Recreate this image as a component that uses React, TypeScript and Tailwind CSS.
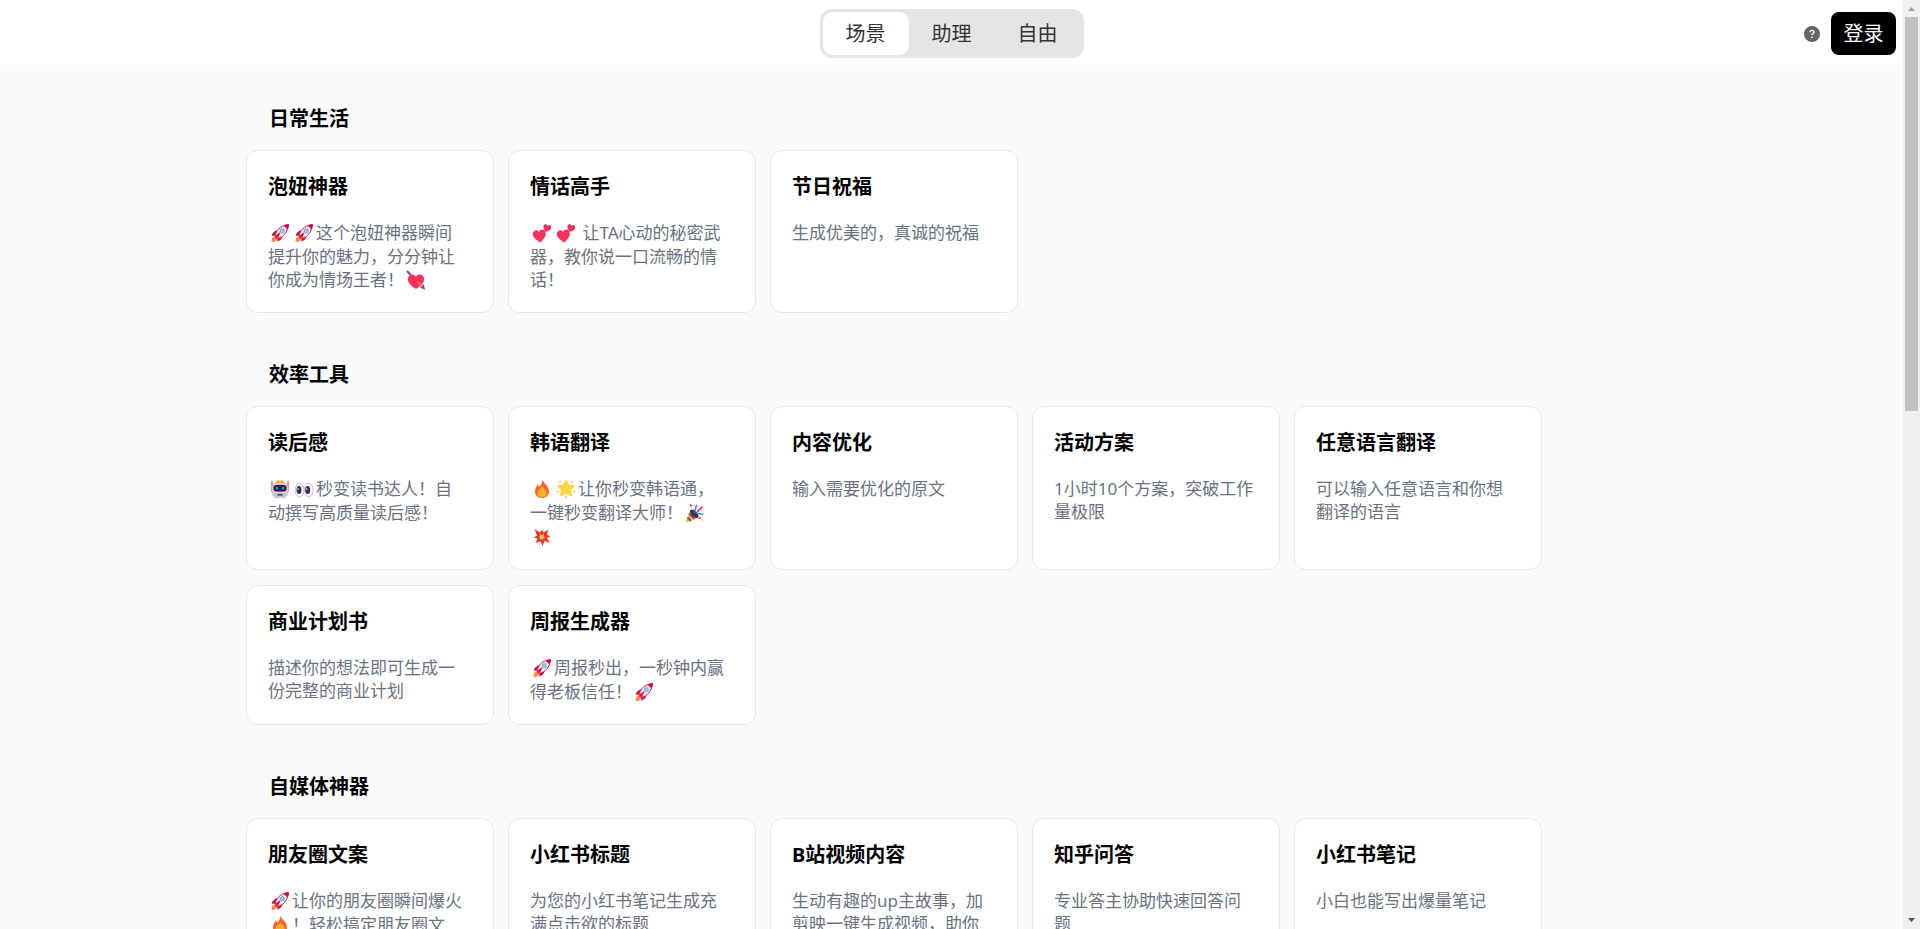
import { Fragment, useState, type ReactNode } from "react";

interface Scene {
  title: string;
  description: string;
}

interface SceneGroup {
  name: string;
  scenes: Scene[];
}

const tabs = ["场景", "助理", "自由"];

const groups: SceneGroup[] = [
  {
    name: "日常生活",
    scenes: [
      { title: "泡妞神器", description: "🚀🚀这个泡妞神器瞬间提升你的魅力，分分钟让你成为情场王者！💘" },
      { title: "情话高手", description: "💕💕 让TA心动的秘密武器，教你说一口流畅的情话！" },
      { title: "节日祝福", description: "生成优美的，真诚的祝福" },
    ],
  },
  {
    name: "效率工具",
    scenes: [
      { title: "读后感", description: "🤖👀秒变读书达人！自动撰写高质量读后感！" },
      { title: "韩语翻译", description: "🔥🌟让你秒变韩语通，一键秒变翻译大师！🎉💥" },
      { title: "内容优化", description: "输入需要优化的原文" },
      { title: "活动方案", description: "1小时10个方案，突破工作量极限" },
      { title: "任意语言翻译", description: "可以输入任意语言和你想翻译的语言" },
      { title: "商业计划书", description: "描述你的想法即可生成一份完整的商业计划" },
      { title: "周报生成器", description: "🚀周报秒出，一秒钟内赢得老板信任！🚀" },
    ],
  },
  {
    name: "自媒体神器",
    scenes: [
      { title: "朋友圈文案", description: "🚀让你的朋友圈瞬间爆火🔥！轻松搞定朋友圈文案，点赞不停！" },
      { title: "小红书标题", description: "为您的小红书笔记生成充满点击欲的标题" },
      { title: "B站视频内容", description: "生动有趣的up主故事，加剪映一键生成视频，助你轻松涨粉" },
      { title: "知乎问答", description: "专业答主协助快速回答问题" },
      { title: "小红书笔记", description: "小白也能写出爆量笔记" },
    ],
  },
];

const heart = "M0 7C-3 4.6-6.5 2-6.5-1.6C-6.5-6-1.6-7 0-3.6C1.6-7 6.5-6 6.5-1.6C6.5 2 3 4.6 0 7Z";

const emojiArt: Record<string, ReactNode> = {
  "🚀": (
    <>
      <path d="M3.500 21c0-3 .8-5 2.700-5.500L9 18.200C8.200 20.200 6.500 21 3.500 21Z" fill="#ff8a50" />
      <path d="M9.500 9.500C6.500 9.500 4.500 11.500 3.500 14.800L8 14.500ZM14.500 14.500c0 3-2 5-5.300 6L9.500 16Z" fill="#ca0b4a" />
      <path d="M7 15c1-5.500 5-10.500 13.500-11.500C19.800 11.500 15 16.500 9.200 17.500Z" fill="#f3eef8" stroke="#d61a59" strokeWidth="1" />
      <path d="M15.500 4.600C17 3.900 18.700 3.400 20.700 3.300C20.700 5.300 20.200 7 19.400 8.500Z" fill="#ca0b4a" />
      <circle cx="14.300" cy="9.800" r="2.200" fill="#83cbff" stroke="#9b9b9b" strokeWidth=".8" />
      <path d="M6.500 14.500 11.500 12.200 10.200 17.800 7.500 17.800Z" fill="#f8312f" />
      <path d="M8 16 12 12" stroke="#ca0b4a" strokeWidth="1.500" />
    </>
  ),
  "💕": (
    <>
      <path d={heart} transform="translate(9.500 14.500) rotate(-6)" fill="#f92f60" />
      <path d={heart} transform="translate(17 7) rotate(14) scale(.6)" fill="#f92f60" />
    </>
  ),
  "💘": (
    <>
      <path d="M3 3 7 7" stroke="#635994" strokeWidth="2.200" />
      <path d={heart} transform="translate(12 13) scale(1.250 1.150)" fill="#f92f60" />
      <path d="M13 13 19 19" stroke="#ff822d" strokeWidth="1.500" />
      <path d="M16.500 19 20 20.500 19 16.500" fill="none" stroke="#635994" strokeWidth="1.500" />
    </>
  ),
  "🤖": (
    <>
      <path d="M4 4V15M20 4V15" stroke="#f8505c" strokeWidth="1.300" />
      <path d="M8.500 3.500h7l1.500 3H7Z" fill="#ffb02e" />
      <path d="M6 6.500h12L20 10v5c0 4-2 6-5.500 6h-5C6 21 4 19 4 15v-5Z" fill="#cdc4d6" />
      <rect x="5.500" y="8" width="13" height="6.500" rx="3" fill="#321b41" />
      <ellipse cx="9" cy="11.200" rx="1.200" ry="1.600" fill="#00a6ed" />
      <ellipse cx="15" cy="11.200" rx="1.200" ry="1.600" fill="#00a6ed" />
      <path d="M9.500 17.800h5" stroke="#321b41" strokeWidth="1.300" />
    </>
  ),
  "👀": (
    <>
      <ellipse cx="7.500" cy="13" rx="4.300" ry="6.800" fill="#fff" stroke="#b7b0c0" strokeWidth=".8" />
      <ellipse cx="16.700" cy="13" rx="4.300" ry="6.800" fill="#fff" stroke="#b7b0c0" strokeWidth=".8" />
      <ellipse cx="7" cy="13" rx="2.500" ry="4" fill="#402a52" />
      <ellipse cx="15.700" cy="13" rx="2.500" ry="4" fill="#402a52" />
      <circle cx="6" cy="12" r=".8" fill="#fff" />
      <circle cx="14.800" cy="12" r=".8" fill="#fff" />
    </>
  ),
  "🔥": (
    <>
      <path d="M12.500 3C14 6.500 19 9 19 14.500C19 18.500 16 21 12 21S5 18.500 5 14.500C5 11.500 6.500 10 7.500 7.500L9.500 9.500C11 8 12 6 12.500 3Z" fill="#ff6723" />
      <path d="M12.500 9.500C13.500 11.500 16.500 13 16.500 16C16.500 18.800 14.500 20.500 12 20.500S7.500 18.800 7.500 16C7.500 13.500 9.500 12.500 12.500 9.500Z" fill="#ffb02e" />
    </>
  ),
  "🌟": (
    <>
      <g fill="#f9c23c">
        <circle cx="6" cy="4.800" r="1" />
        <circle cx="18" cy="4.800" r="1" />
        <circle cx="4" cy="14.500" r="1" />
        <circle cx="20.200" cy="14.500" r="1" />
        <circle cx="12" cy="20.300" r="1" />
      </g>
      <path d="M12 3 14.600 8 20.500 9 16.500 13.200 17.500 19 12 16.500 6.500 19 7.500 13.200 3.500 9 9.400 8Z" fill="#fcd53f" stroke="#fcd53f" strokeLinejoin="round" />
    </>
  ),
  "🎉": (
    <>
      <path d="M7.500 9 15 16.500 4.500 21C3.300 21.200 3 20.500 3.300 19.500Z" fill="#ffb02e" />
      <path d="M6 12.500 11.500 18M4.500 16.500 8 20" stroke="#635994" strokeWidth="1.800" />
      <ellipse cx="11.200" cy="12.700" rx="2.800" ry="5.200" transform="rotate(-45 11.200 12.700)" fill="#5a1f3c" />
      <path d="M11 12C13.500 10.500 11 7.500 14 4M13.500 13C16 11 18 14.500 20.500 12.500" fill="none" stroke="#00a6ed" strokeWidth="1.600" />
      <path d="M14 11 19.500 5.500" stroke="#f70a8d" strokeWidth="1.500" />
      <path d="M7 3.500l1.500 2M15.500 16.500l2 1" stroke="#f70a8d" strokeWidth="1.400" />
      <circle cx="18" cy="9" r="1" fill="#f9c23c" />
      <circle cx="11" cy="4.500" r=".9" fill="#f9c23c" />
      <circle cx="19" cy="19" r=".9" fill="#f9c23c" />
    </>
  ),
  "💥": (
    <>
      <path d="M4.500 4 9.500 7.500 12.500 5 13.500 7.500 18.500 4.500 16.800 9.500 20.500 11.500 16.800 13 20 17.500 14.500 16 12.500 21 10.500 16.200 5.500 18 7.500 13.800 4 12.200 7 10.500Z" fill="#f8312f" />
      <path d="M9.500 9 12 10 14 8.800 13.800 11.200 15.200 12.500 13.500 13 13 14.800 11.500 13.700 9.500 14.500 10 12.500 8.800 11.500 10 11Z" fill="#fcd53f" />
    </>
  ),
};

function Emoji({ symbol }: { symbol: string }) {
  return (
    <svg viewBox="0 0 24 24" role="img" aria-label={symbol} className="inline-block h-6 w-6 align-top">
      {emojiArt[symbol]}
    </svg>
  );
}

// Swap every known emoji for its drawing and leave the rest as text
function RichText({ text }: { text: string }) {
  const parts = text.split(/(\p{Extended_Pictographic})/u).filter(Boolean);
  return (
    <>
      {parts.map((part, index) =>
        emojiArt[part] ? <Emoji key={index} symbol={part} /> : <Fragment key={index}>{part}</Fragment>
      )}
    </>
  );
}

function SceneCard({ scene }: { scene: Scene }) {
  return (
    <a
      href="#"
      className="block w-[248px] rounded-xl border border-gray-200 bg-white px-[21px] pt-[22px] pb-5 hover:shadow-md"
    >
      <h3 className="text-xl leading-7 font-bold text-black">{scene.title}</h3>
      <p className="mt-5 mr-1 text-[17px] leading-[23px] text-gray-500">
        <RichText text={scene.description} />
      </p>
    </a>
  );
}

function Header() {
  const [activeTab, setActiveTab] = useState(tabs[0]);

  return (
    <header className="grid h-[65px] shrink-0 grid-cols-[1fr_auto_1fr] items-center bg-white pt-0.5">
      <div />
      <nav className="flex rounded-xl bg-[#e5e5e5] p-[3px]">
        {tabs.map((tab) => (
          <button
            key={tab}
            onClick={() => setActiveTab(tab)}
            className={`h-[43px] px-[23px] text-xl text-[#333333] ${
              activeTab === tab ? "rounded-[10px] bg-white" : ""
            }`}
          >
            {tab}
          </button>
        ))}
      </nav>
      <div className="flex items-center justify-end gap-[11px] pr-[7px]">
        <button aria-label="帮助">
          <svg viewBox="0 0 16 16" className="h-4 w-4">
            <circle cx="8" cy="8" r="8" fill="#666666" />
            <path
              d="M6 6.300C6 5 6.900 4.300 8 4.300S10 5 10 6.200C10 7.500 8 7.600 8 9.200"
              fill="none"
              stroke="#ffffff"
              strokeWidth="1.300"
            />
            <circle cx="8" cy="11.300" r=".9" fill="#ffffff" />
          </svg>
        </button>
        <button className="h-[43px] w-[65px] rounded-lg bg-black text-xl text-white">登录</button>
      </div>
    </header>
  );
}

function ScrollBar() {
  return (
    <div className="flex w-[17px] shrink-0 flex-col items-center bg-[#f0f0f0]" aria-hidden="true">
      <svg viewBox="0 0 17 17" className="h-[17px] w-[17px] shrink-0">
        <path d="M5 11 8.500 7 12 11Z" fill="#a3a3a3" />
      </svg>
      <div className="flex w-[13px] flex-1 flex-col">
        <div className="h-[44%] bg-[#c1c1c1]" />
      </div>
      <svg viewBox="0 0 17 17" className="h-[17px] w-[17px] shrink-0">
        <path d="M5 6 8.500 10 12 6Z" fill="#505050" />
      </svg>
    </div>
  );
}

export default function App() {
  return (
    <div className="flex h-screen overflow-hidden bg-[#f9fafc] font-['Noto_Sans','Noto_Sans_CJK_SC',sans-serif]">
      <div className="flex min-w-0 flex-1 flex-col">
        <Header />
        <main className="min-h-0 flex-1 overflow-hidden px-6 pt-10">
          <div className="mx-auto flex max-w-[1411px] flex-col gap-12">
            {groups.map((group) => (
              <section key={group.name}>
                <h2 className="mb-[17px] pl-[23px] text-xl leading-7 font-bold text-black">{group.name}</h2>
                <div className="flex flex-wrap gap-x-3.5 gap-y-[15px]">
                  {group.scenes.map((scene) => (
                    <SceneCard key={scene.title} scene={scene} />
                  ))}
                </div>
              </section>
            ))}
          </div>
        </main>
      </div>
      <ScrollBar />
    </div>
  );
}
